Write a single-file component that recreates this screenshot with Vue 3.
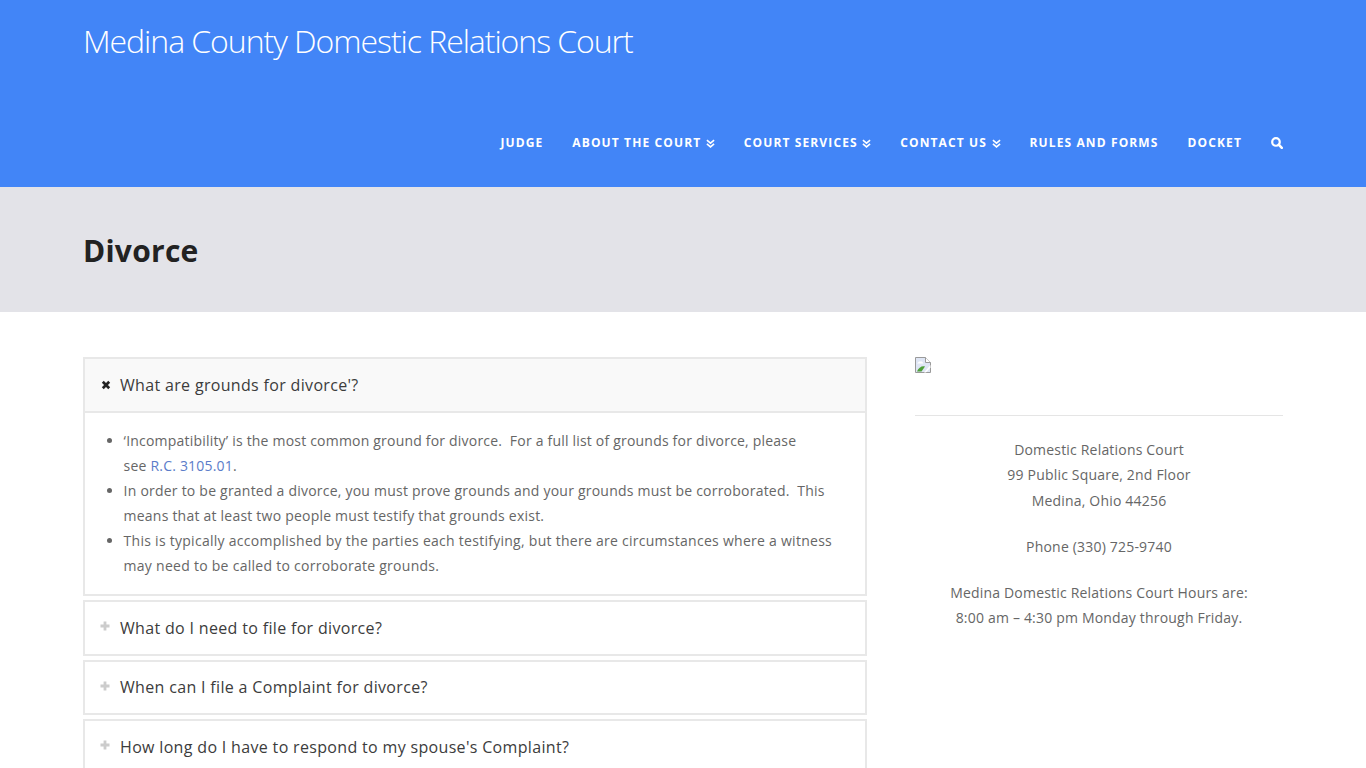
<script setup>
import { ref } from "vue";

const nav = [
  { label: "Judge" },
  { label: "About the Court", more: true },
  { label: "Court Services", more: true },
  { label: "Contact Us", more: true },
  { label: "Rules and Forms" },
  { label: "Docket" },
];

const questions = [
  "What are grounds for divorce'?",
  "What do I need to file for divorce?",
  "When can I file a Complaint for divorce?",
  "How long do I have to respond to my spouse's Complaint?",
];

const openIndex = ref(0);
const toggle = (i) => {
  openIndex.value = openIndex.value === i ? -1 : i;
};
</script>

<template>
  <header class="top">
    <div class="wrap">
      <a class="brand" href="#">Medina County Domestic Relations Court</a>
      <nav class="nav">
        <a v-for="item in nav" :key="item.label" class="nav-link" href="#">
          {{ item.label }}
          <svg v-if="item.more" class="chev" viewBox="0 0 10 10" width="9" height="9">
            <path d="M1 1.2 5 4.6 9 1.2M1 5.4 5 8.8 9 5.4" fill="none" stroke="#fff" stroke-width="1.7" />
          </svg>
        </a>
        <a class="nav-link search" href="#">
          <svg viewBox="0 0 14 14" width="12" height="12">
            <circle cx="5.8" cy="5.8" r="4.4" fill="none" stroke="#fff" stroke-width="2.6" />
            <path d="M9 9 12.6 12.6" stroke="#fff" stroke-width="3" stroke-linecap="round" />
          </svg>
        </a>
      </nav>
    </div>
  </header>

  <section class="title-bar">
    <div class="wrap">
      <h1>Divorce</h1>
    </div>
  </section>

  <main class="wrap content">
    <div class="main-col">
      <div v-for="(q, i) in questions" :key="q" class="panel">
        <div class="panel-head" :class="{ active: openIndex === i }" @click="toggle(i)">
          <svg v-if="openIndex === i" class="ico times" viewBox="0 0 10 10" width="10" height="10">
            <path d="M1.8 1.8 8.2 8.2M8.2 1.8 1.8 8.2" stroke="#222" stroke-width="2.7" />
          </svg>
          <svg v-else class="ico plus" viewBox="0 0 10 10" width="10" height="10">
            <path d="M5 0.5V9.5M0.5 5H9.5" stroke="#ccc" stroke-width="2.8" />
          </svg>
          <span>{{ q }}</span>
        </div>
        <div v-if="openIndex === i && i === 0" class="panel-body">
          <ul>
            <li>‘Incompatibility’ is the most common ground for divorce.&nbsp; For a full list of grounds for divorce, please see&nbsp;<a href="#">R.C.&nbsp;3105.01</a>.</li>
            <li>In order to be granted a divorce, you must prove grounds and your grounds must be corroborated.&nbsp; This means that at least two people must testify that grounds exist.</li>
            <li>This is typically accomplished by the parties each testifying, but there are circumstances where a witness may need to be called to corroborate grounds.</li>
          </ul>
        </div>
      </div>
    </div>

    <aside class="side">
      <svg class="broken" viewBox="0 0 16 16" width="16" height="16">
        <path d="M0.5 0.5H10.5L15.5 5.5V15.5H0.5Z" fill="#dfe6f5" stroke="#9a9a9a" />
        <path d="M10.5 0.5V5.5H15.5" fill="#fff" stroke="#9a9a9a" />
        <path d="M2 6.5 4 4.5H7L8.5 6.5Z" fill="#fff" />
        <path d="M2 14.5C3.5 10.5 7 8.5 10 9.5L6.5 14.5Z" fill="#4fa03a" />
        <path d="M15.5 8 9 15.5H11L15.5 10.5Z" fill="#fff" />
      </svg>
      <hr />
      <div class="info">
        <p>Domestic Relations Court<br />99 Public Square, 2nd Floor<br />Medina, Ohio 44256</p>
        <p>Phone (330) 725-9740</p>
        <p>Medina Domestic Relations Court Hours are:<br />8:00 am – 4:30 pm Monday through Friday.</p>
      </div>
    </aside>
  </main>
</template>

<style scoped>
.wrap {
  width: 1200px;
  margin: 0 auto;
  box-sizing: border-box;
}
.top {
  background: #4285f7;
  height: 187px;
}
.top .wrap {
  display: flex;
  flex-direction: column;
  height: 100%;
}
.brand {
  color: #fff;
  text-decoration: none;
  font-size: 32px;
  font-weight: 300;
  letter-spacing: -1.05px;
  line-height: 40px;
  margin-top: 21px;
}
.nav {
  display: flex;
  justify-content: flex-end;
  align-items: center;
  margin-top: 72px;
  gap: 29px;
}
.nav-link {
  color: #fff;
  text-decoration: none;
  text-transform: uppercase;
  font-size: 12px;
  font-weight: 700;
  letter-spacing: 1.12px;
  line-height: 20px;
  display: flex;
  align-items: center;
  gap: 4.5px;
}
.title-bar {
  background: #e3e3e8;
  height: 125px;
}
.title-bar .wrap {
  display: flex;
  align-items: center;
  height: 100%;
}
h1 {
  margin: 2px 0 0;
  font-size: 30px;
  font-weight: 700;
  letter-spacing: 0.25px;
  color: #222;
  line-height: 40px;
}
.content {
  display: flex;
  gap: 48px;
  padding-top: 45px;
}
.main-col {
  width: 784px;
  flex: none;
}
.panel {
  border: 2px solid #e8e8e8;
  margin-bottom: 4px;
}
.panel-head {
  display: flex;
  align-items: center;
  height: 51.5px;
  padding-left: 15px;
  font-size: 16px;
  letter-spacing: 0.33px;
  color: #3c3c3c;
  cursor: pointer;
}
.panel-head.active {
  background: #f9f9f9;
  border-bottom: 2px solid #e8e8e8;
  height: 52px;
}
.ico {
  margin-right: 10px;
  flex: none;
}
.times {
  transform: translateX(1px);
}
.plus {
  margin-top: -3px;
}
.panel-body {
  padding: 15px 30px 15.5px 10px;
  font-size: 14px;
  line-height: 25.1px;
  color: #666;
}
ul {
  margin: 0;
  padding-left: 28.6px;
}
li:nth-child(1) {
  letter-spacing: 0.2px;
}
li:nth-child(2) {
  letter-spacing: 0.22px;
}
li:nth-child(3) {
  letter-spacing: 0.27px;
}
a {
  color: #5b7cc9;
  text-decoration: none;
}
.side {
  width: 368px;
  flex: none;
  font-size: 14px;
  line-height: 25.4px;
  letter-spacing: 0.19px;
  color: #666;
}
.broken {
  display: block;
}
hr {
  border: 0;
  border-top: 1px solid #e5e5e5;
  margin: 42px 0 21px;
}
.info {
  text-align: center;
}
.info p {
  margin: 0 0 20.6px;
}
</style>

<style>
html,
body {
  margin: 0;
  background: #fff;
  font-family: "Open Sans", sans-serif;
  height: 768px;
  overflow: hidden;
}
</style>
